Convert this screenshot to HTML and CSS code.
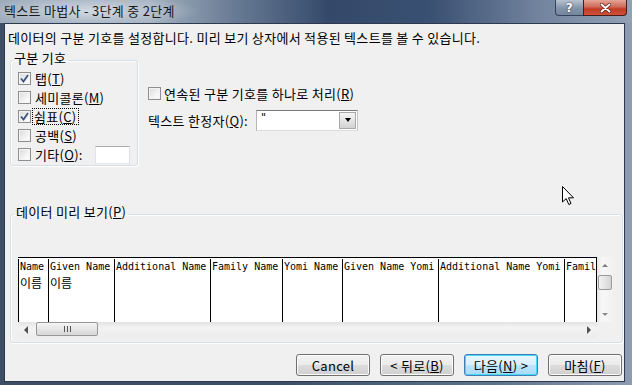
FILE: index.html
```html
<!DOCTYPE html>
<html>
<head>
    <title>텍스트 마법사 - 3단계 중 2단계</title>
    <link rel="stylesheet" href="styles.css">
</head>

<body>
    <div class="titlebar">
        <span class="title">텍스트 마법사 - 3단계 중 2단계</span>
        <div class="caption">
            <span class="cap-btn help">?</span>
            <span class="cap-btn close">
                <svg width="11" height="10" viewBox="0 0 11 10"><path d="M1.5 1.5 L9.5 8.5 M9.5 1.5 L1.5 8.5" stroke="#5a1a12" stroke-width="3.4" stroke-linecap="round"/><path d="M1.5 1.5 L9.5 8.5 M9.5 1.5 L1.5 8.5" stroke="#fff" stroke-width="2" stroke-linecap="round"/></svg>
            </span>
        </div>
    </div>

    <div class="client">
        <div class="intro">데이터의 구분 기호를 설정합니다. 미리 보기 상자에서 적용된 텍스트를 볼 수 있습니다.</div>

        <div class="top-row">
            <fieldset class="group delims">
                <legend>구분 기호</legend>
                <div class="check-row">
                    <span class="box"><svg width="11" height="11" viewBox="0 0 11 11"><path d="M2 5.5 L4.5 8.5 L9 2" fill="none" stroke="#3d5280" stroke-width="1.8"/></svg></span>
                    <span>탭(<u>T</u>)</span>
                </div>
                <div class="check-row">
                    <span class="box"></span>
                    <span>세미콜론(<u>M</u>)</span>
                </div>
                <div class="check-row">
                    <span class="box"><svg width="11" height="11" viewBox="0 0 11 11"><path d="M2 5.5 L4.5 8.5 L9 2" fill="none" stroke="#3d5280" stroke-width="1.8"/></svg></span>
                    <span class="focused">쉼표(<u>C</u>)</span>
                </div>
                <div class="check-row">
                    <span class="box"></span>
                    <span>공백(<u>S</u>)</span>
                </div>
                <div class="check-row">
                    <span class="box"></span>
                    <span class="other-label">기타(<u>O</u>):</span>
                    <span class="textbox"></span>
                </div>
            </fieldset>

            <div class="options">
                <div class="check-row">
                    <span class="box"></span>
                    <span>연속된 구분 기호를 하나로 처리(<u>R</u>)</span>
                </div>
                <div class="combo-row">
                    <span class="combo-label">텍스트 한정자(<u>Q</u>):</span>
                    <div class="combo">
                        <span class="combo-value">"</span>
                        <span class="drop"><span class="tri-down"></span></span>
                    </div>
                </div>
            </div>
        </div>

        <fieldset class="group preview">
            <legend>데이터 미리 보기(<u>P</u>)</legend>
            <div class="preview-box">
                <div class="grid">
                    <div class="col" style="width: 30px"><div>Name</div><div class="ko">이름</div></div>
                    <div class="col" style="width: 66px"><div>Given Name</div><div class="ko">이름</div></div>
                    <div class="col" style="width: 96px"><div>Additional Name</div></div>
                    <div class="col" style="width: 72px"><div>Family Name</div></div>
                    <div class="col" style="width: 60px"><div>Yomi Name</div></div>
                    <div class="col" style="width: 96px"><div>Given Name Yomi</div></div>
                    <div class="col" style="width: 126px"><div>Additional Name Yomi</div></div>
                    <div class="col last"><div>Famil</div></div>
                </div>
                <div class="vscroll">
                    <span class="arrow"><span class="tri-up"></span></span>
                    <span class="vthumb"></span>
                    <span class="fill"></span>
                    <span class="arrow"><span class="tri-down light"></span></span>
                </div>
                <div class="hscroll">
                    <span class="arrow"><span class="tri-left"></span></span>
                    <span class="hthumb"><span class="grip"></span></span>
                    <span class="fill"></span>
                    <span class="arrow"><span class="tri-right"></span></span>
                </div>
                <div class="corner"></div>
            </div>
        </fieldset>

        <div class="buttons">
            <span class="btn">Cancel</span>
            <span class="btn">&lt; 뒤로(<u>B</u>)</span>
            <span class="btn default">다음(<u>N</u>) &gt;</span>
            <span class="btn">마침(<u>F</u>)</span>
        </div>
    </div>

    <!-- mouse pointer over the dialog -->
    <svg class="cursor" width="13" height="20" viewBox="0 0 13 20">
        <path d="M0.5 0.5 L0.5 16 L4.2 12.6 L6.8 18.5 L9 17.5 L6.5 11.8 L11.5 11.8 Z" fill="#fff" stroke="#000" stroke-width="1" stroke-linejoin="round"/>
    </svg>
</body>

</html>
```

FILE: styles.css
```css
* {
    box-sizing: border-box;
}

body {
    margin: 0;
    width: 632px;
    height: 385px;
    overflow: hidden;
    position: relative;
    font-family: "Noto Sans CJK KR", "Noto Sans", sans-serif;
    font-size: 13px;
    letter-spacing: 0.3px;
    color: #000;
    background: linear-gradient(90deg, #3e4e64 0, #3c4e68 45%, #62758e 80%, #8d9cb0 100%);
}

/* window caption */
.titlebar {
    height: 23px;
    display: flex;
    align-items: flex-start;
    background:
        radial-gradient(ellipse 110px 16px at 90px 11px, rgba(225, 231, 238, 0.75), rgba(225, 231, 238, 0) 100%),
        linear-gradient(90deg, #9eabbb 0, #a2afbf 150px, #687b94 235px, #34496a 330px, #3a5072 430px, #72849e 540px, #93a1b5 632px);
}

.title {
    padding-left: 4px;
    line-height: 22px;
    color: #1a1a1a;
}

.caption {
    margin-left: auto;
    margin-right: 5px;
    display: flex;
}

.cap-btn {
    height: 16px;
    display: flex;
    align-items: center;
    justify-content: center;
    border: 1px solid #34435a;
    border-top: none;
}

.help {
    width: 28px;
    border-radius: 0 0 0 4px;
    border-right: none;
    background: linear-gradient(#b8c3d0, #8393a9 55%, #74869e);
    color: #fff;
    font-family: "DejaVu Sans", sans-serif;
    font-weight: bold;
    font-size: 12px;
    text-shadow: 0 0 2px #223;
}

.close {
    width: 44px;
    border-radius: 0 0 4px 0;
    border-color: #4a1c16;
    background: linear-gradient(#e4a597, #cf6a58 45%, #c23a25 60%, #d0523a);
}

/* dialog body */
.client {
    margin-left: 4px;
    width: 621px;
    height: 359px;
    background: #f0f0f0;
    border: 1px solid #2c3a4d;
}

.intro {
    margin: 6px 0 0 3px;
    line-height: 16px;
    height: 16px;
    white-space: nowrap;
}

.top-row {
    display: flex;
    align-items: flex-start;
    margin-top: 5px;
}

.group {
    margin: 0;
    min-width: 0;
    border: 1px solid #d5dfe5;
    border-radius: 3px;
    box-shadow: inset 1px 1px 0 #fff, 1px 1px 0 #fff;
}

.group legend {
    line-height: 14px;
    padding: 0 2px 4px 2px;
}

.delims {
    margin-left: 5px;
    width: 128px;
    padding: 0 0 1px 7px;
}

.delims legend {
    margin-left: -6px;
}

.check-row {
    display: flex;
    align-items: center;
    height: 19px;
    gap: 4px;
    white-space: nowrap;
}

.box {
    width: 13px;
    height: 13px;
    flex: none;
    border: 1px solid #8e8f8f;
    background: linear-gradient(135deg, #dadada, #f7f7f7 70%, #fff);
    box-shadow: inset 0 0 0 1px #f4f4f4;
    display: flex;
    align-items: center;
    justify-content: center;
}

.focused {
    outline: 1px dotted #000;
    outline-offset: 0;
    padding: 0 1px;
    margin-left: -2px;
    line-height: 15px;
}

.other-label {
    width: 56px;
}

.textbox {
    width: 35px;
    height: 18px;
    background: #fff;
    border: 1px solid #abadb3;
    border-color: #abadb3 #dbdfe6 #e3e9ef #e2e3ea;
}

.options {
    margin-left: 10px;
}

.options .check-row {
    margin-top: 33px;
    gap: 3px;
}

.combo-row {
    display: flex;
    align-items: center;
    height: 22px;
    margin-top: 6px;
}

.combo-label {
    width: 108px;
    white-space: nowrap;
}

.combo {
    width: 102px;
    height: 21px;
    display: flex;
    background: #fff;
    border: 1px solid #7a7a7a;
    border-color: #7a7a7a #c5c5c5 #dcdcdc #b5b5b5;
    padding: 1px;
}

.combo-value {
    flex: 1;
    padding-left: 3px;
    line-height: 12px;
    font-family: "DejaVu Sans", sans-serif;
    font-size: 11px;
    color: #000;
}

.drop {
    width: 17px;
    display: flex;
    align-items: center;
    justify-content: center;
    border: 1px solid #a8a8a8;
    background: linear-gradient(#f4f4f4, #e4e4e4 50%, #d2d2d2);
}

.tri-down {
    border-top: 4px solid #000;
    border-left: 3.5px solid transparent;
    border-right: 3.5px solid transparent;
}

.tri-down.light {
    border-top-color: #8a8a8a;
    border-top-width: 3px;
    border-left-width: 3px;
    border-right-width: 3px;
}

.tri-up {
    border-bottom: 3px solid #7a7a7a;
    border-left: 3px solid transparent;
    border-right: 3px solid transparent;
}

.tri-left {
    border-right: 4px solid #505050;
    border-top: 4px solid transparent;
    border-bottom: 4px solid transparent;
}

.tri-right {
    border-left: 4px solid #505050;
    border-top: 4px solid transparent;
    border-bottom: 4px solid transparent;
}

/* data preview */
.preview {
    margin: 39px 0 0 5px;
    width: 613px;
    padding: 0 0 4px 7px;
}

.preview legend {
    margin-left: -4px;
}

.preview-box {
    margin-top: 34px;
    display: grid;
    grid-template-columns: 579px 16px;
    grid-template-rows: 65px 16px;
}

.grid {
    display: flex;
    overflow: hidden;
    background: #fff;
    border-top: 1px solid #000;
    border-right: 1px solid #000;
    font-family: "DejaVu Sans Mono", "Liberation Mono", monospace;
    font-size: 10px;
    letter-spacing: 0;
    line-height: 16px;
    padding-top: 1px;
}

.col {
    flex: none;
    border-left: 1px solid #000;
    padding-left: 1px;
    white-space: nowrap;
    overflow: hidden;
}

.col.last {
    flex: 1;
}

.ko {
    font-family: "Noto Sans CJK KR", sans-serif;
    font-size: 12px;
}

.vscroll {
    display: flex;
    flex-direction: column;
    background: linear-gradient(90deg, #e6e6e6, #f7f7f7 30%, #f2f2f2);
}

.hscroll {
    display: flex;
    background: linear-gradient(#e3e3e3, #f3f3f3 35%, #ececec);
}

.arrow {
    width: 16px;
    height: 16px;
    flex: none;
    display: flex;
    align-items: center;
    justify-content: center;
}

.fill {
    flex: 1;
}

.vthumb {
    margin: 2px 1px 0 1px;
    height: 15px;
    border: 1px solid #9a9a9a;
    border-radius: 2px;
    background: linear-gradient(90deg, #f2f2f2, #e4e4e4 50%, #d4d4d4);
}

.hthumb {
    margin: 0 0 2px 2px;
    width: 62px;
    border: 1px solid #979797;
    border-radius: 2px;
    background: linear-gradient(#f4f4f4, #e6e6e6 50%, #d6d6d6);
    display: flex;
    align-items: center;
    justify-content: center;
}

.grip {
    width: 7px;
    height: 6px;
    background: repeating-linear-gradient(90deg, #555 0, #555 1px, transparent 1px, transparent 3px);
}

.corner {
    background: #f0f0f0;
}

/* bottom buttons */
.buttons {
    display: flex;
    justify-content: flex-end;
    gap: 10px;
    margin-top: 11px;
    padding-right: 2px;
}

.btn {
    width: 74px;
    height: 22px;
    display: flex;
    align-items: center;
    justify-content: center;
    border: 1px solid #707070;
    border-radius: 3px;
    background: linear-gradient(#f2f2f2, #ebebeb 50%, #dddddd 50%, #cfcfcf);
    box-shadow: inset 0 0 0 1px #fcfcfc;
}

.btn.default {
    border-color: #3c7fb1;
    background: linear-gradient(#eaf6fd, #d9f0fc 50%, #bee6fd 50%, #a7d9f5);
    box-shadow: inset 0 0 0 1px #48d8fb;
}

.cursor {
    position: absolute;
    left: 562px;
    top: 186px;
}
```
